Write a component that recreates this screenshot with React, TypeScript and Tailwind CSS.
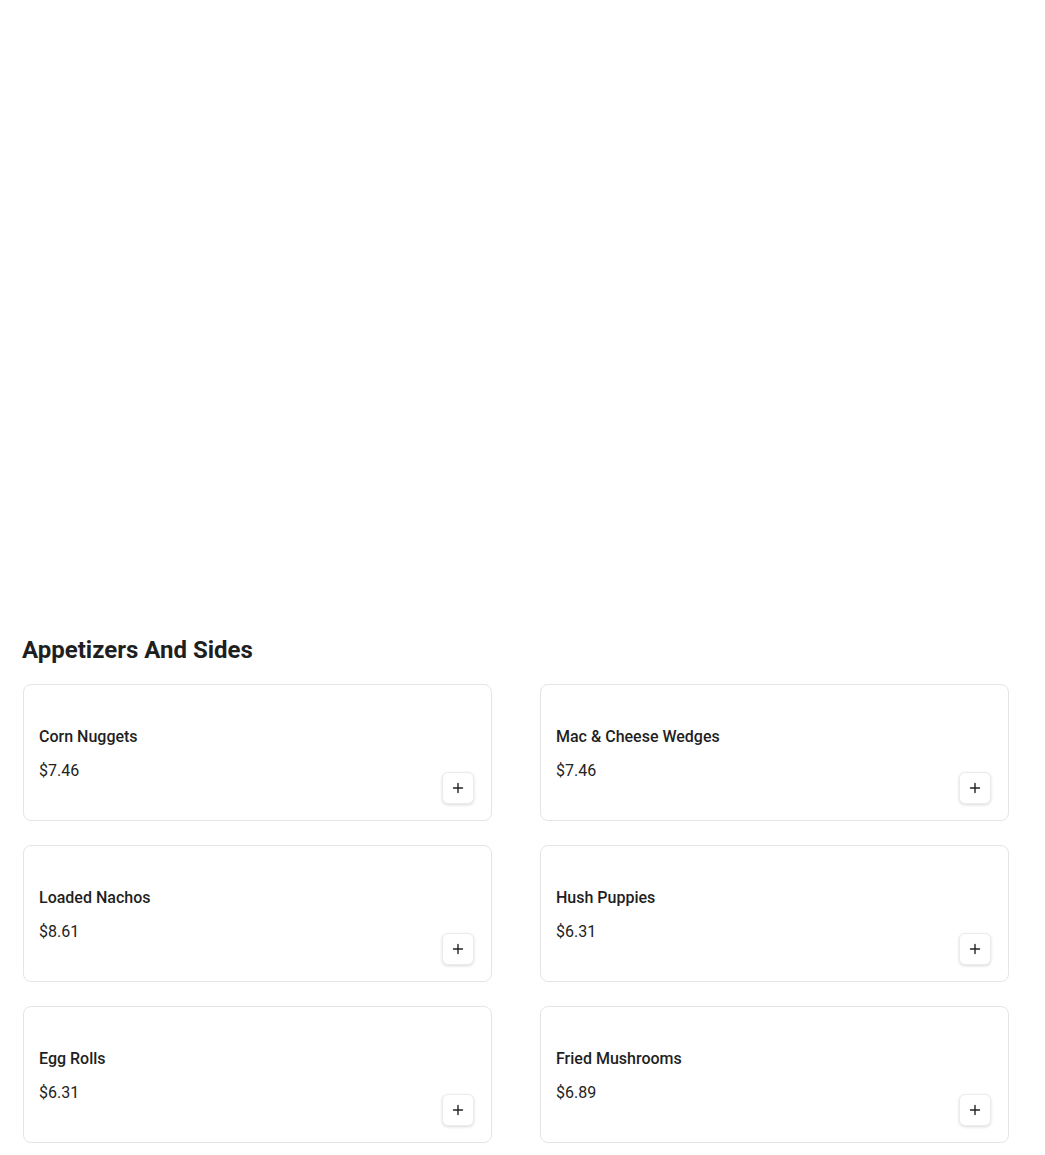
import React from 'react';

const ITEMS = [
    { name: 'Corn Nuggets', price: '$7.46' },
    { name: 'Mac & Cheese Wedges', price: '$7.46' },
    { name: 'Loaded Nachos', price: '$8.61' },
    { name: 'Hush Puppies', price: '$6.31' },
    { name: 'Egg Rolls', price: '$6.31' },
    { name: 'Fried Mushrooms', price: '$6.89' },
];

const PlusIcon: React.FC = () => (
    <svg width="12" height="12" viewBox="0 0 12 12" fill="none" stroke="#222" strokeWidth="1.4" strokeLinecap="round">
        <path d="M6 1.5v9M1.5 6h9" />
    </svg>
);

const App: React.FC = () => {
    return (
        <div className="w-full min-h-[1155px] bg-white font-['Roboto',sans-serif] text-[#1a1a1a]">
            <section className="pt-[634px] pl-[23px] pr-[36px]">
                <h2 className="-ml-px text-[24px] leading-[32px] font-bold text-[#1f1f1f] mb-[18px]">Appetizers And Sides</h2>
                <div className="grid grid-cols-2 gap-x-[48px] gap-y-[24px]">
                    {ITEMS.map((item, index) => (
                        <div key={index} className="relative h-[137px] rounded-lg border border-[#e5e5e5] bg-white pl-[15px] pr-4 pt-[40px]">
                            <h3 className="text-[16px] leading-[24px] font-medium text-[#1f1f1f]">{item.name}</h3>
                            <p className="mt-[10px] text-[16px] leading-[24px] text-[#222]">{item.price}</p>
                            <button className="absolute right-[17px] bottom-[16px] w-8 h-8 flex items-center justify-center rounded-md bg-white border border-[#ececec] shadow-[0_1px_3px_rgba(0,0,0,0.15)]">
                                <PlusIcon />
                            </button>
                        </div>
                    ))}
                </div>
            </section>
        </div>
    );
};

export default App;
